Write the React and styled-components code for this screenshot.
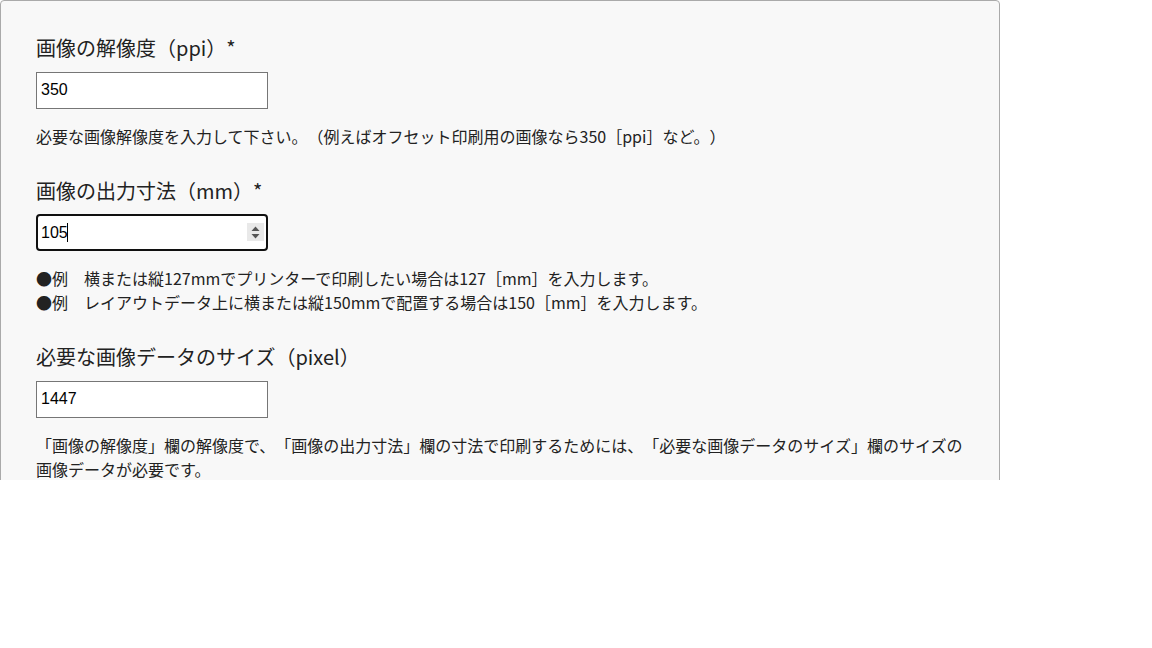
import React from 'react'
import styled, { createGlobalStyle } from 'styled-components'

const GlobalStyle = createGlobalStyle`
  html, body {
    margin: 0;
    padding: 0;
    background: #fff;
  }
  body {
    font-family: "Noto Sans CJK JP", "Noto Sans", sans-serif;
    color: #222;
    text-spacing-trim: space-all;
  }
`

const examples = [
  '●例　横または縦127mmでプリンターで印刷したい場合は127［mm］を入力します。',
  '●例　レイアウトデータ上に横または縦150mmで配置する場合は150［mm］を入力します。',
]

const App = () => {
  return (
    <>
      <GlobalStyle />
      <Frame>
        <Panel>
          <Section>
            <Label>画像の解像度（ppi）*</Label>
            <TextInput type='text' defaultValue='350' />
            <Help>必要な画像解像度を入力して下さい。（例えばオフセット印刷用の画像なら350［ppi］など。）</Help>
          </Section>

          <Section>
            <Label>画像の出力寸法（mm）*</Label>
            <FieldWrap>
              <TextInput type='text' defaultValue='105' $focused />
              <Caret />
              <Spinner>
                <svg width='9' height='13' viewBox='0 0 9 13'>
                  <path d='M4.5 0.5 L8.5 5 L0.5 5 Z' fill='#555' />
                  <path d='M0.5 8 L8.5 8 L4.5 12.5 Z' fill='#555' />
                </svg>
              </Spinner>
            </FieldWrap>
            <Help>
              {examples.map((line) => (
                <Line key={line}>{line}</Line>
              ))}
            </Help>
          </Section>

          <Section>
            <Label>必要な画像データのサイズ（pixel）</Label>
            <TextInput type='text' defaultValue='1447' readOnly />
            <Help>「画像の解像度」欄の解像度で、「画像の出力寸法」欄の寸法で印刷するためには、「必要な画像データのサイズ」欄のサイズの画像データが必要です。</Help>
          </Section>
        </Panel>
      </Frame>
    </>
  )
}

export default App

const Frame = styled.div`
  height: 480px;
  overflow: hidden;
`

const Panel = styled.div`
  width: 1000px;
  box-sizing: border-box;
  border: 1px solid #aaa;
  border-radius: 4px;
  background: #f8f8f8;
  padding: 32px 35px 40px;
  display: flex;
  flex-direction: column;
  gap: 28px;
`

const Section = styled.div`
  display: flex;
  flex-direction: column;
  align-items: flex-start;
`

const Label = styled.div`
  font-size: 20px;
  line-height: 30px;
  margin-bottom: 8.5px;
  color: #222;
`

const FieldWrap = styled.div`
  position: relative;
`

const TextInput = styled.input`
  width: 232px;
  height: 37px;
  box-sizing: border-box;
  margin: 0;
  padding: 0 4px;
  font-family: "Liberation Sans", Arial, sans-serif;
  font-size: 16px;
  color: #000;
  background: #fff;
  outline: none;
  caret-color: transparent;
  border: ${(p) => (p.$focused ? '2px solid #101010' : '1px solid #767676')};
  border-radius: ${(p) => (p.$focused ? '4px' : '0')};
  padding-left: ${(p) => (p.$focused ? '3px' : '4px')};
`

const Caret = styled.span`
  position: absolute;
  left: 31px;
  top: 9px;
  width: 1px;
  height: 19px;
  background: #000;
`

const Spinner = styled.span`
  position: absolute;
  right: 4px;
  top: 9px;
  width: 17px;
  height: 18px;
  background: #e9e9e9;
  display: flex;
  align-items: center;
  justify-content: center;
`

const Help = styled.div`
  margin-top: 15px;
  font-size: 16px;
  line-height: 24px;
  color: #222;
  width: 100%;
`

const Line = styled.div``
